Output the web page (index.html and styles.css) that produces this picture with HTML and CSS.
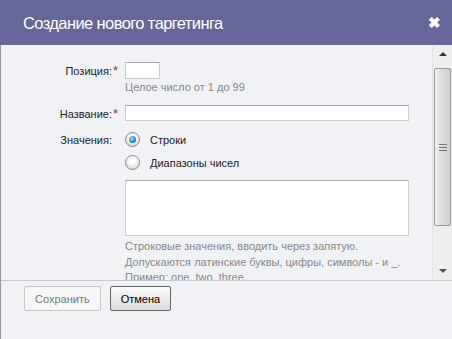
FILE: index.html
```html
<!DOCTYPE html>
<html lang="ru">
<head>
  <meta charset="UTF-8" />
  <title>Создание нового таргетинга</title>
  <link rel="stylesheet" href="styles.css">
</head>
<body>

  <div class="dialog">
    <!-- Заголовок окна -->
    <div class="dialog-head">
      <span class="dialog-title">Создание нового таргетинга</span>
      <span class="close">&#10006;</span>
    </div>

    <!-- Содержимое с прокруткой -->
    <div class="dialog-body">
      <div class="form">
        <div class="row">
          <label class="label">Позиция:<span class="req">*</span></label>
          <div class="field">
            <input type="text" class="input short" />
            <div class="hint">Целое число от 1 до 99</div>
          </div>
        </div>

        <div class="row row-tight">
          <label class="label">Название:<span class="req">*</span></label>
          <div class="field">
            <input type="text" class="input wide" />
          </div>
        </div>

        <div class="row">
          <label class="label label-radio">Значения:<span class="req"></span></label>
          <div class="field">
            <div class="radio-line"><span class="radio checked"></span>Строки</div>
            <div class="radio-line"><span class="radio"></span>Диапазоны чисел</div>
            <textarea class="area"></textarea>
            <div class="hint help">
              Строковые значения, вводить через запятую.<br>
              Допускаются латинские буквы, цифры, символы - и _.<br>
              Пример: one, two, three
            </div>
          </div>
        </div>
      </div>

      <div class="scrollbar">
        <div class="sb-btn"><span class="arrow-up"></span></div>
        <div class="sb-track">
          <div class="sb-thumb"><span class="grip"></span></div>
        </div>
        <div class="sb-btn"><span class="arrow-down"></span></div>
      </div>
    </div>

    <!-- Кнопки -->
    <div class="dialog-foot">
      <button class="btn disabled">Сохранить</button>
      <button class="btn">Отмена</button>
    </div>
  </div>

</body>
</html>
```

FILE: styles.css
```css
body {
  margin: 0;
  font-family: 'Liberation Sans', Arial, sans-serif;
  font-size: 11px;
  color: #222;
  background: #f1f2f6;
}

.dialog {
  width: 452px;
  height: 339px;
  border-left: 1px solid #999;
  box-sizing: border-box;
  display: flex;
  flex-direction: column;
  background: #f1f2f6;
}

.dialog-head {
  height: 45px;
  flex: none;
  background: #666698;
  display: flex;
  align-items: center;
  justify-content: space-between;
  padding: 0 11px 0 23px;
  margin-left: -1px;
}

.dialog-title {
  color: #fff;
  font-size: 16.5px;
  letter-spacing: -0.6px;
  padding-top: 1px;
}

.close {
  color: #fff;
  font-size: 15px;
  font-weight: bold;
}

.dialog-body {
  height: 235px;
  flex: none;
  display: flex;
  border-bottom: 1px solid #c8c8cc;
}

.form {
  flex: 1;
  overflow: hidden;
  padding-top: 17px;
}

.row {
  display: flex;
  margin-bottom: 11px;
}

.row-tight {
  margin-bottom: 7px;
}

.label {
  width: 119px;
  display: flex;
  justify-content: flex-end;
  padding-top: 3px;
  flex: none;
}

.label-radio {
  padding-top: 6px;
}

.req {
  width: 7px;
  color: #a33;
  padding-left: 1px;
  font-size: 13px;
  line-height: 12px;
}

.field {
  margin-left: 5px;
  flex: 1;
  padding-right: 24px;
}

.input {
  display: block;
  height: 17px;
  box-sizing: border-box;
  border: 1px solid #ccc;
  border-top-color: #aaa;
  background: #fff;
  margin: 0;
  padding: 0 2px;
}

.short {
  width: 35px;
}

.wide {
  width: 284px;
  height: 16px;
}

.hint {
  color: #888;
  margin-top: 2px;
  line-height: 13px;
}

.radio-line {
  display: flex;
  align-items: center;
  height: 23px;
}

.radio {
  width: 13px;
  height: 13px;
  border-radius: 50%;
  border: 1px solid #8a8a8a;
  background: radial-gradient(circle at 50% 35%, #fff 20%, #ddd 75%);
  margin-right: 10px;
  position: relative;
  flex: none;
}

.radio.checked::after {
  content: "";
  position: absolute;
  left: 3px;
  top: 3px;
  width: 7px;
  height: 7px;
  border-radius: 50%;
  background: radial-gradient(circle at 40% 35%, #8fd2f5 10%, #2a8ac4 55%, #0a4a78 100%);
}

.area {
  display: block;
  width: 284px;
  height: 56px;
  box-sizing: border-box;
  border: 1px solid #ccc;
  border-top-color: #aaa;
  background: #fff;
  margin: 6px 0 0;
  resize: none;
}

.help {
  line-height: 15.5px;
  margin-top: 3px;
}

/* Полоса прокрутки */
.scrollbar {
  width: 19px;
  flex: none;
  display: flex;
  flex-direction: column;
  background: #eeeeee;
  border-left: 1px solid #e2e2e2;
}

.sb-btn {
  height: 18px;
  display: flex;
  align-items: center;
  justify-content: center;
}

.arrow-up {
  border: 4px solid transparent;
  border-top: none;
  border-bottom: 4px solid #333;
}

.arrow-down {
  border: 4px solid transparent;
  border-bottom: none;
  border-top: 4px solid #555;
}

.sb-track {
  flex: 1;
  padding-top: 5px;
}

.sb-thumb {
  height: 156px;
  margin: 0 1px;
  border: 1px solid #999;
  border-radius: 2px;
  background: linear-gradient(to right, #f0f0f0, #e0e0e0 40%, #cdcdcd 100%);
  display: flex;
  align-items: center;
  justify-content: center;
}

.grip {
  width: 8px;
  height: 7px;
  background: repeating-linear-gradient(to bottom, #777 0 1px, transparent 1px 3px);
}

.dialog-foot {
  flex: 1;
  display: flex;
  align-items: flex-start;
  padding: 5px 0 0 23px;
  gap: 9px;
}

.btn {
  height: 25px;
  padding: 0 10px;
  font-family: 'Liberation Sans', Arial, sans-serif;
  font-size: 11px;
  border-radius: 2px;
  border: 1px solid #666;
  background: linear-gradient(#fafafa, #dcdcdc);
  color: #000;
}

.btn.disabled {
  border-color: #c4c4c4;
  background: #f6f6f6;
  color: #777;
}
```
